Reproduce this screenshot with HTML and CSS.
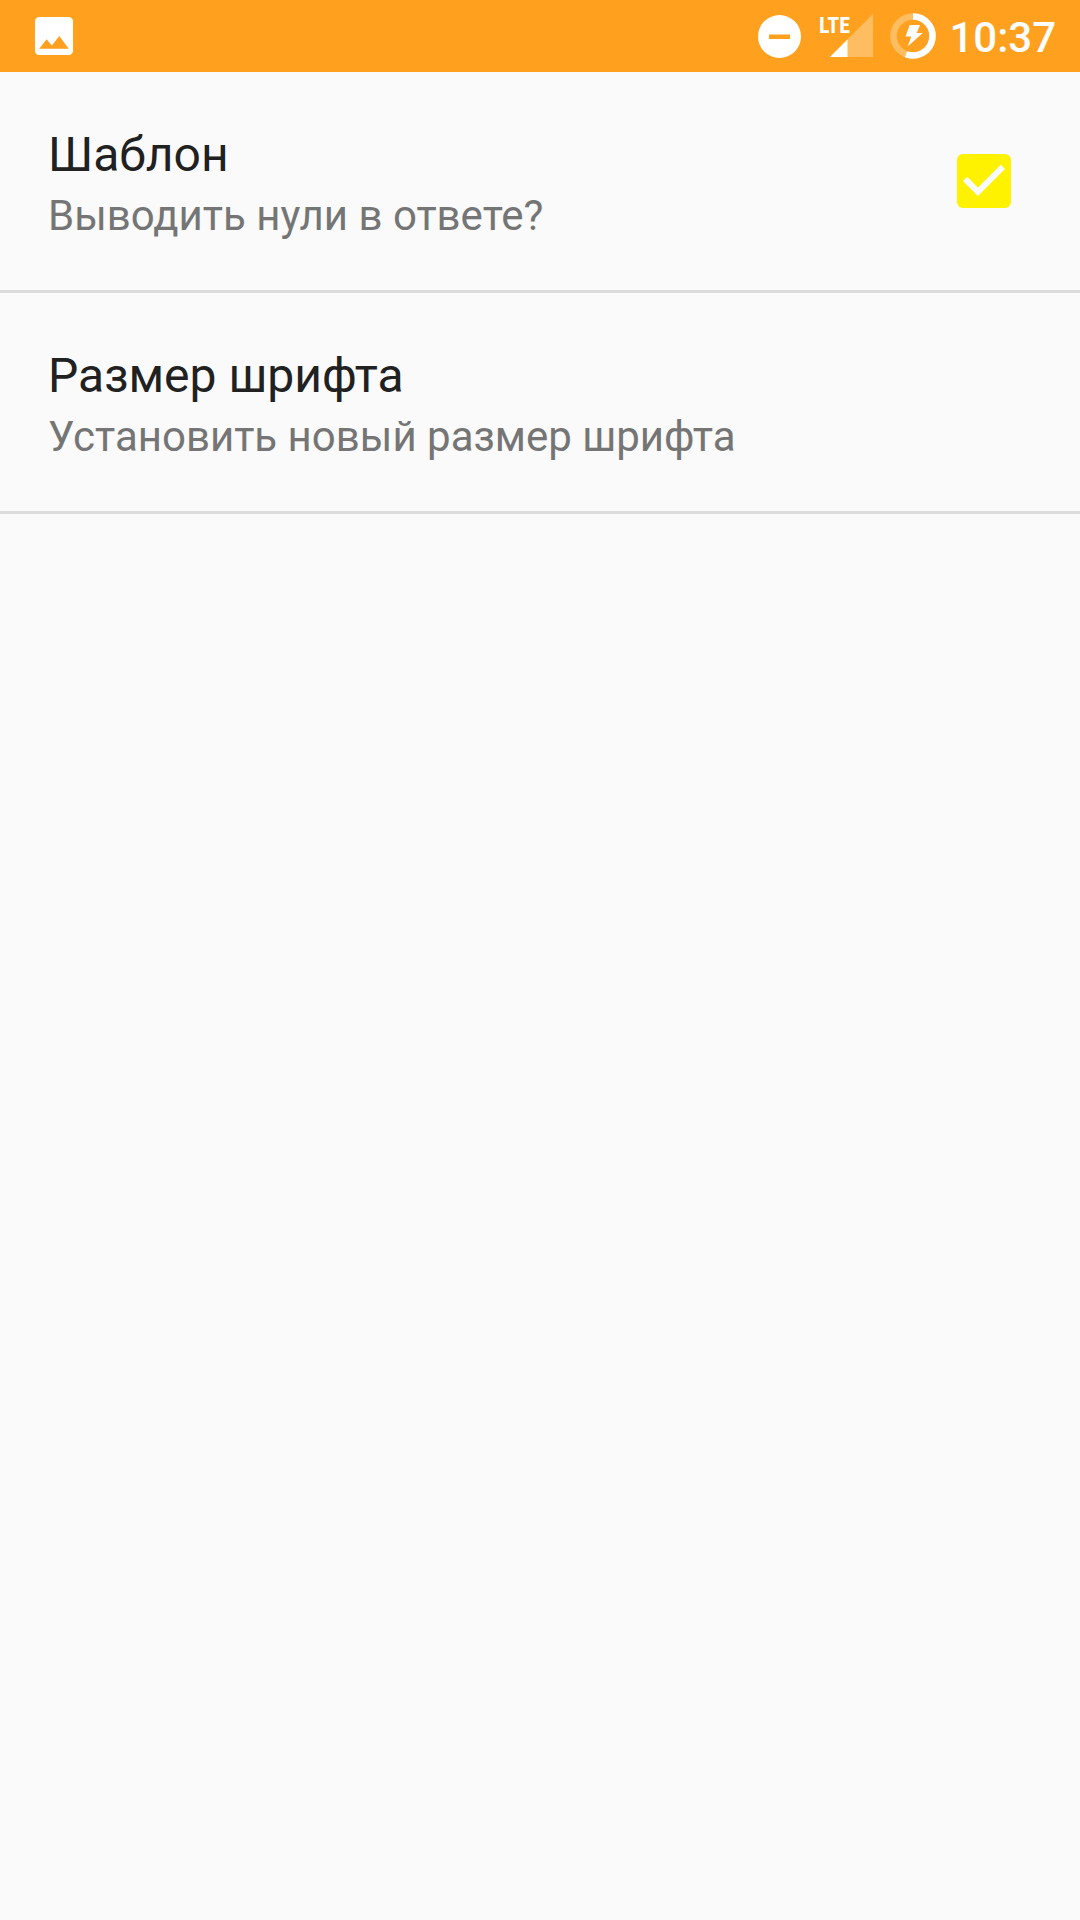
FILE: index.html
```html
<!DOCTYPE html>
<html lang="ru">
<head>
  <meta charset="utf-8">
  <meta name="viewport" content="width=device-width, initial-scale=1">
  <title>Настройки</title>
  <link rel="stylesheet" href="styles.css">
</head>
<body>
  <header class="status-bar">
    <svg class="icon-picture" viewBox="3 3 18 18" aria-hidden="true">
      <path fill="#fff" d="M21 19V5c0-1.1-.9-2-2-2H5c-1.1 0-2 .9-2 2v14c0 1.1.9 2 2 2h14c1.1 0 2-.9 2-2zM8.5 13.5l2.5 3.01L14.5 12l4.5 6H5l3.5-4.5z"/>
    </svg>
    <div class="status-icons">
      <svg class="icon-dnd" viewBox="0 0 44 46" aria-hidden="true">
        <path fill="#fff" fill-rule="evenodd" d="M21.5 2a21.5 21.5 0 1 0 0 43a21.5 21.5 0 1 0 0-43zM11 21.500h21v4.500h-21z"/>
      </svg>
      <svg class="icon-signal" viewBox="0 0 54 46" role="img" aria-label="LTE">
        <path fill="#fff" fill-opacity=".3" d="M11 44L54 1V44z"/>
        <path fill="#fff" d="M11 44L28.500 26.500V44z"/>
        <text class="signal-type" x="0" y="20">LTE</text>
      </svg>
      <svg class="icon-battery" viewBox="0 0 46 46" aria-hidden="true">
        <circle cx="23" cy="23" r="19.500" fill="none" stroke="#fff" stroke-opacity=".3" stroke-width="6.500"/>
        <path fill="none" stroke="#fff" stroke-width="6.500" d="M23 3.500A19.500 19.500 0 1 1 16 41.200"/>
        <path fill="#fff" d="M19.700 12H30L26.700 20H32.700L17.700 33.500L21.300 23.500H15.500z"/>
      </svg>
    </div>
    <time class="clock">10:37</time>
  </header>

  <main class="settings">
    <label class="setting">
      <span class="setting-text">
        <span class="setting-title">Шаблон</span>
        <span class="setting-summary">Выводить нули в ответе?</span>
      </span>
      <span class="checkbox">
        <input class="checkbox-input" type="checkbox" checked>
        <svg class="checkbox-mark" viewBox="3 3 18 18" aria-hidden="true">
          <path fill="#fafafa" d="M10 17l-5-5 1.410-1.410L10 14.170l7.590-7.590L19 8z"/>
        </svg>
      </span>
    </label>
    <button class="setting" type="button">
      <span class="setting-text">
        <span class="setting-title">Размер шрифта</span>
        <span class="setting-summary">Установить новый размер шрифта</span>
      </span>
    </button>
  </main>
</body>
</html>
```

FILE: styles.css
```css
* {
  box-sizing: border-box;
}

body {
  margin: 0;
  min-height: 100vh;
  background: #fafafa;
  color: #212121;
  font-family: Roboto, "Noto Sans", sans-serif;
}

.status-bar {
  display: flex;
  align-items: center;
  height: 72px;
  padding: 0 24px 0 35px;
  background: #ffa11f;
  color: #fff;
}

.icon-picture {
  width: 38px;
  height: 38px;
}

.status-icons {
  display: flex;
  gap: 17px;
  margin-left: auto;
}

.icon-dnd {
  width: 44px;
  height: 46px;
}

.icon-signal {
  width: 54px;
  height: 46px;
  overflow: visible;
}

.icon-battery {
  width: 46px;
  height: 46px;
}

.signal-type {
  fill: #fff;
  font-family: "Roboto Condensed", "Liberation Sans Narrow", Roboto, sans-serif;
  font-size: 22px;
  font-weight: 700;
}

.clock {
  margin-left: 13px;
  font-size: 42px;
  font-weight: 500;
  line-height: 48px;
  padding-top: 4px;
}

.settings {
  display: flex;
  flex-direction: column;
}

.setting {
  display: flex;
  align-items: center;
  justify-content: space-between;
  width: 100%;
  padding: 48px 69px 48px 48px;
  border: 0;
  border-bottom: 3px solid #dcdcdc;
  background: none;
  color: inherit;
  font: inherit;
  text-align: left;
  cursor: pointer;
}

.setting-text {
  display: flex;
  flex-direction: column;
}

.setting-title {
  font-size: 48px;
  line-height: 70px;
}

.setting-summary {
  color: #757575;
  font-size: 42px;
  line-height: 52px;
}

.checkbox {
  display: grid;
}

.checkbox-input,
.checkbox-mark {
  grid-area: 1 / 1;
  width: 54px;
  height: 54px;
}

.checkbox-input {
  appearance: none;
  margin: 0;
  border-radius: 6px;
  background: #fff200;
}

.checkbox-mark {
  z-index: 1;
  pointer-events: none;
  visibility: hidden;
}

.checkbox-input:checked + .checkbox-mark {
  visibility: visible;
}
```
